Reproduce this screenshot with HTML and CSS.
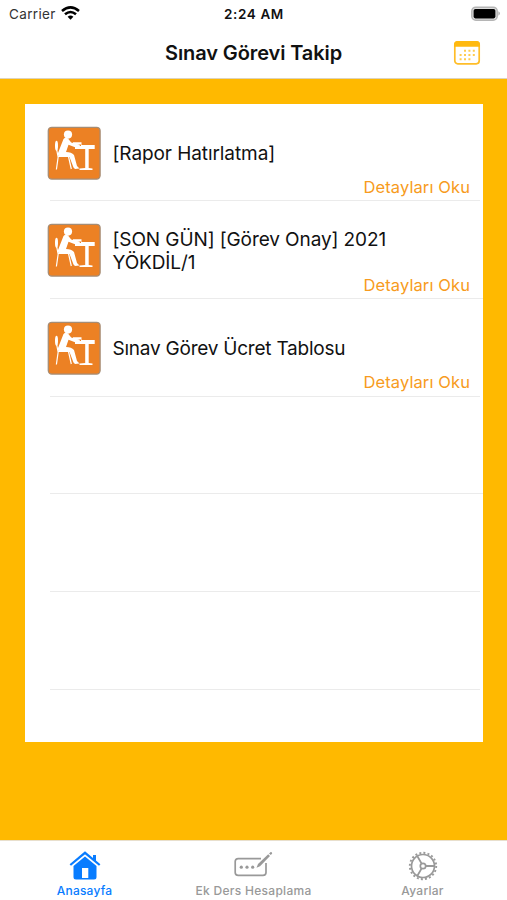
FILE: index.html
```html
<!DOCTYPE html>
<html lang="tr">
<head>
<meta charset="utf-8">
<title>Sınav Görevi Takip</title>
<link rel="stylesheet" href="styles.css">
</head>
<body>
<svg class="defs" width="0" height="0">
  <symbol id="desk" viewBox="0 0 54 54">
    <rect x="1.3" y="1.3" width="51.8" height="51.8" rx="3.5" fill="#ec8124" stroke="#a58c74" stroke-width="1.3"/>
    <g fill="#fff">
      <circle cx="21" cy="8.6" r="4.1"/>
      <path d="M16.5 13Q18.5 10.8 21 12.5L24.2 16.4 32 18.5 34 21 30 22 21.5 18.8 19 26Q24.5 26 27 29L30 40 32.5 42.4 28 43 26.5 41.5 22.5 31 11.5 30.8 10.8 27.5Z"/>
      <path d="M26 16.2H34.5V19H47.7V23H41.7V42L45.5 42.6V44H32.5V42.6L38.2 42V23H28V20H34V18.5H26Z"/>
      <ellipse cx="9.5" cy="19.8" rx="1.5" ry="5"/>
    </g>
    <path d="M9 20 11 30.5H23M11.3 30 9.4 43.5M21.5 30.5 24.3 43" fill="none" stroke="#fff" stroke-width="1.2"/>
  </symbol>
</svg>
<header class="top">
  <div class="status">
    <div class="carrier"><span>Carrier</span>
      <svg width="19" height="14" viewBox="0 0 19 14"><g fill="none" stroke="#000" stroke-width="2.6"><path d="M1 5Q9.5-2.2 18 5"/><path d="M4 8.3Q9.5 3.7 15 8.3"/></g><path d="M6.6 10.7Q9.5 8.2 12.4 10.7L9.5 13.7Z"/></svg>
    </div>
    <div class="clock">2:24 AM</div>
    <svg class="battery" width="32" height="16" viewBox="0 0 32 16"><rect x="1.8" y="1.2" width="25.4" height="13" rx="4" fill="#ddd" stroke="#b5b5b5" stroke-width="1.5"/><rect x="3.6" y="3" width="21.8" height="9.4" rx="1.8"/><path d="M28.5 5.3Q31 7.5 28.5 9.7Z" fill="#999"/></svg>
  </div>
  <div class="nav">
    <h1>Sınav Görevi Takip</h1>
    <svg class="calendar" width="28" height="26" viewBox="0 0 28 26"><rect x="1.8" y="1.8" width="24.4" height="22" rx="3" fill="#fff" stroke="#ffbd28" stroke-width="1.7"/><path d="M1 6.7V4.5Q1 1 4.5 1H23.5Q27 1 27 4.5V6.7Z" fill="#ffb90f"/><g stroke="#ffcc50" stroke-width="2" stroke-dasharray="2 2.4"><path d="M11 10.8H22M6.6 15H22M6.6 19.3H17.5"/></g></svg>
  </div>
</header>
<main>
  <div class="card">
    <div class="row short"><svg class="thumb"><use href="#desk"/></svg><p class="t1">[Rapor Hatırlatma]</p><a>Detayları Oku</a></div>
    <div class="row"><svg class="thumb"><use href="#desk"/></svg><p class="t2">[SON GÜN] [Görev Onay] 2021<br>YÖKDİL/1</p><a>Detayları Oku</a></div>
    <div class="row short"><svg class="thumb"><use href="#desk"/></svg><p class="t3">Sınav Görev Ücret Tablosu</p><a>Detayları Oku</a></div>
    <div class="row"></div>
    <div class="row short"></div>
    <div class="row short"></div>
  </div>
</main>
<footer>
  <div class="tab active">
    <svg width="32" height="30" viewBox="0 0 32 30"><path d="M24 4H27V11L24 8Z"/><path d="M1.3 14 16 1.8 30.7 14" fill="none" stroke="currentColor" stroke-width="2.2"/><path fill-rule="evenodd" d="M16 5.5 27.5 15V26Q27.5 28.5 25 28.5H7Q4.5 28.5 4.5 26V15ZM13 17V27H19.3V17Z"/></svg>
    <span>Anasayfa</span>
  </div>
  <div class="tab calc">
    <svg width="40" height="30" viewBox="0 0 40 30"><g fill="none" stroke="currentColor" stroke-width="1.7"><path d="M27 7.7H4.2Q1.2 7.7 1.2 10.5V21.5Q1.2 24.3 4.2 24.3H29Q32 24.3 32 21.5V12"/></g><path d="M22.5 16.8 24 13 34.2 3.3 36 5.1 26 15.2ZM35 2.4 36.7 1Q37.8.7 38.2 2.4L36.8 4.1Z"/><circle cx="7.3" cy="16.2" r="1.6"/><circle cx="13" cy="16.2" r="1.6"/><circle cx="18.7" cy="16.2" r="1.6"/></svg>
    <span>Ek Ders Hesaplama</span>
  </div>
  <div class="tab settings">
    <svg width="30" height="30" viewBox="0 0 30 30"><g fill="none" stroke="currentColor"><circle cx="15" cy="15" r="13.2" stroke-width="1.9" stroke-dasharray="2 2.147"/><circle cx="15" cy="15" r="11.5" stroke-width="1.7"/><circle cx="15" cy="15" r="2.7" stroke-width="1.7"/><path d="M18 15H27M13.5 12.4 9.1 4.8M13.5 17.6 9.1 25.2" stroke-width="1.8"/></g></svg>
    <span>Ayarlar</span>
  </div>
</footer>
</body>
</html>
```

FILE: styles.css
```css
* { box-sizing: border-box; }
body { margin: 0; width: 507px; height: 900px; display: flex; flex-direction: column; overflow: hidden; background: #fff; color: #111; font-family: Inter, "Liberation Sans", sans-serif; }
.defs { position: absolute; }
.top { height: 79px; flex: none; border-bottom: 1px solid #ddd3bc; }
.status { display: grid; grid-template-columns: 1fr auto 1fr; height: 27px; align-items: center; padding: 1px 5px 0 9px; font-size: 13.5px; }
.carrier { display: flex; align-items: center; gap: 5px; letter-spacing: .35px; color: #333; }
.carrier svg { margin-top: -2px; }
.clock { font-weight: 600; font-size: 13.5px; letter-spacing: .6px; margin-right: 3px; }
.battery { justify-self: end; margin-top: -1px; }
.nav { height: 51px; display: grid; grid-template-columns: 1fr auto 1fr; align-items: center; padding: 0 26px; }
h1 { grid-column: 2; margin: 0; font-size: 20px; font-weight: 600; letter-spacing: -.1px; white-space: nowrap; }
.calendar { justify-self: end; }
main { flex: 1; background: #ffb900; padding: 24.5px 24.5px 0 25px; }
.card { height: 638.5px; background: #fff; }
.row { height: 97.7px; margin-left: 25px; display: grid; grid-template-columns: 63px 1fr; grid-template-rows: 75px 18px; background: linear-gradient(#ebebeb, #ebebeb) left bottom / 100% 1px no-repeat; }
.row.short { background-size: calc(100% - 3px) 1px; }
.thumb { width: 54px; height: 54px; margin: 22px 0 0 -3px; }
.row p { margin: 24px 0 0 -.5px; align-self: center; font-size: 19px; line-height: 23px; white-space: nowrap; }
.t1 { letter-spacing: -.08px; }
.t2 { letter-spacing: -.1px; }
.t3 { letter-spacing: -.23px; }
.row a { grid-column: 2; justify-self: end; margin: -.5px 12.5px 0 0; font-size: 16.5px; line-height: 18px; color: #f79b20; letter-spacing: .1px; }
footer { height: 60px; flex: none; display: grid; grid-template-columns: 169px 169px 169px; background: #fff; border-top: 1px solid #e8dfcd; }
.tab { display: flex; flex-direction: column; align-items: center; color: #999; font-size: 12px; font-weight: 500; line-height: 14px; padding-top: 10px; }
.tab svg { fill: currentColor; display: block; height: 30px; margin-bottom: 3px; }
.active { color: #087cff; }
.active span { letter-spacing: .2px; }
.calc span { letter-spacing: .3px; }
.settings span { letter-spacing: .25px; }
```
